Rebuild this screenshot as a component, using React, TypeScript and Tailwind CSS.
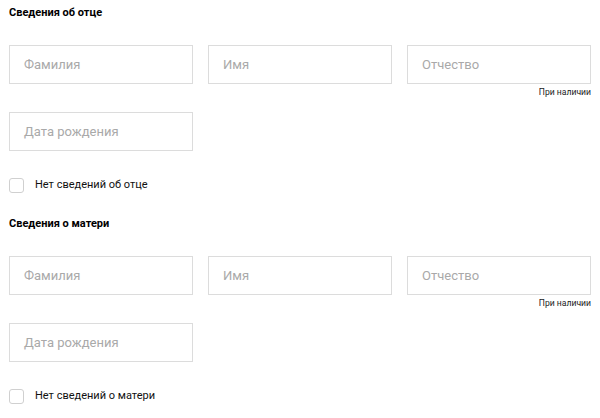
import React from "react";

function Field({ placeholder }: { placeholder: string }) {
  return (
    <div className="h-[39px] border border-[#dcdcdc] flex items-center pl-[14px] text-[13px] text-[#a9a9a9]">
      {placeholder}
    </div>
  );
}

function Section({ title, none }: { title: string; none: string }) {
  return (
    <div className="flex flex-col">
      <div className="text-[11px] leading-[13px] font-bold text-black h-[13px] mt-[6px]">{title}</div>
      <div className="grid grid-cols-3 gap-[15px] mt-[26px]">
        <Field placeholder="Фамилия" />
        <Field placeholder="Имя" />
        <Field placeholder="Отчество" />
      </div>
      <div className="flex justify-end text-[8.6px] leading-[12px] text-[#222] mt-[2px] h-[12px]">При наличии</div>
      <div className="grid grid-cols-3 gap-[15px] mt-[14px]">
        <Field placeholder="Дата рождения" />
      </div>
      <div className="flex items-center mt-[26px] h-[16px]">
        <div className="w-[15px] h-[15px] border border-[#d0d0d0] rounded-[3px] bg-white" />
        <span className="ml-[11px] text-[11px] text-[#111]">{none}</span>
      </div>
    </div>
  );
}

export default function App() {
  return (
    <div
      className="w-[600px] h-[418px] bg-white overflow-hidden pl-[9px] pr-[9px]"
      style={{ fontFamily: "Roboto, 'Liberation Sans', sans-serif" }}
    >
      <div className="w-[582px] flex flex-col gap-[18px]">
        <Section title="Сведения об отце" none="Нет сведений об отце" />
        <Section title="Сведения о матери" none="Нет сведений о матери" />
      </div>
    </div>
  );
}
